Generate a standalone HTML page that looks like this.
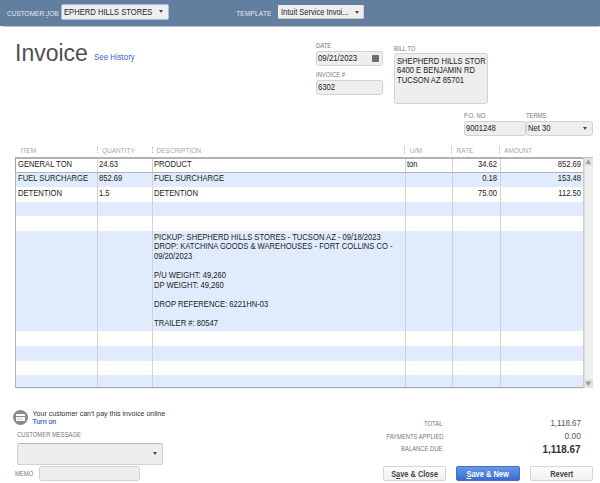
<!DOCTYPE html>
<html><head><meta charset="utf-8">
<style>
*{margin:0;padding:0;box-sizing:border-box}
html,body{width:600px;height:483px;overflow:hidden;background:#fff}
body{position:relative;font-family:"Liberation Sans",sans-serif;color:#333;font-size:7.7px;line-height:1}
.a{position:absolute;white-space:nowrap}
.hdr{left:0;top:0;width:600px;height:26px;background:rgb(98,127,160);box-shadow:0 .6px .8px rgba(60,80,110,.35)}
.hl{color:#e2e8ef;font-size:6.5px}
.lbl{color:#777;font-size:6.5px;transform:scaleX(.9);transform-origin:0 0}
.lbl.r{transform-origin:100% 0}
.inp{background:#eeeeee;border:1px solid #d2d2d2;border-radius:2.5px}
.arr{width:0;height:0;border-left:2.5px solid transparent;border-right:2.5px solid transparent;border-top:3px solid #484848}
.row{position:absolute;left:16px;width:567px;height:15px}
.b{background:#e0ecfd}
.vl{position:absolute;top:157px;height:230px;width:1px;background:#d2d2d2}
.t{position:absolute;font-size:8.4px;color:#222;white-space:nowrap;transform:scaleX(.91);transform-origin:0 0}
.r{text-align:right}
.tr{position:absolute;font-size:8.4px;color:#222;white-space:nowrap;transform:scaleX(.91);transform-origin:100% 0;text-align:right}
.hd{position:absolute;top:148.4px;font-size:6.5px;color:#a8a8a8}
.dot{position:absolute;top:147px;width:1px;height:6px;border-left:1px dotted #b8b8b8}
</style></head><body>
<div class="a hdr"></div>
<div class="a hl" style="left:7px;top:10.5px">CUSTOMER:JOB</div>
<div class="a" style="left:46.6px;top:16.6px;width:1.8px;height:.9px;background:#c8d2de"></div>
<div class="a" style="left:61px;top:4.3px;width:108.3px;height:15.4px;border:1.5px solid #a3bfe6;border-radius:2px;background:#efefef"></div>
<div class="t" style="left:64px;top:8px">EPHERD HILLS STORES</div>
<div class="a arr" style="left:159.3px;top:10.2px"></div>
<div class="a hl" style="left:236.2px;top:10.5px;letter-spacing:.2px">TEMPLATE</div>
<div class="a" style="left:278.2px;top:4.6px;width:86.3px;height:14.6px;background:#eee;border-radius:1px;border-bottom:1px solid #c4c4c4;border-right:1px solid #d0d0d0"></div>
<div class="t" style="left:281px;top:8px;transform:scaleX(.895)">Intuit Service Invoi...</div>
<div class="a arr" style="left:354.5px;top:10.5px"></div>

<div class="a" style="left:15px;top:41.5px;font-size:23px;color:#505050">Invoice</div>
<div class="a" style="left:94.3px;top:53.4px;font-size:8.4px;color:#3a66c8;transform:scaleX(.94);transform-origin:0 0">See History</div>

<div class="a lbl" style="left:316px;top:42.5px">DATE</div>
<div class="a inp" style="left:316px;top:51px;width:67px;height:15px"></div>
<div class="t" style="left:318px;top:54px;transform:scaleX(.935)">09/21/2023</div>
<div class="a" style="left:372px;top:54.8px;width:7px;height:7.1px;background:#6c6c6c;border-radius:.8px"></div>
<div class="a lbl" style="left:316px;top:71.8px">INVOICE #</div>
<div class="a inp" style="left:316px;top:79.5px;width:67px;height:15px"></div>
<div class="t" style="left:318px;top:83px">6302</div>

<div class="a lbl" style="left:394px;top:45.5px">BILL TO</div>
<div class="a inp" style="left:394px;top:53.4px;width:94px;height:50.6px"></div>
<div class="t" style="left:397px;top:57.1px;line-height:9.35px">SHEPHERD HILLS STOR<br>6400 E BENJAMIN RD<br>TUCSON AZ 85701</div>

<div class="a lbl" style="left:464px;top:112.5px">P.O. NO.</div>
<div class="a inp" style="left:463.5px;top:121.4px;width:62px;height:14.5px"></div>
<div class="t" style="left:465.5px;top:124.2px">9001248</div>
<div class="a lbl" style="left:526.3px;top:112.5px">TERMS</div>
<div class="a inp" style="left:526.3px;top:121.4px;width:66.5px;height:14.5px"></div>
<div class="t" style="left:528px;top:124.2px">Net 30</div>
<div class="a arr" style="left:583.3px;top:126.8px;border-left-width:2.5px;border-right-width:2.5px;border-top-width:3px"></div>

<!-- table header -->
<div class="hd" style="left:20.6px">ITEM</div>
<div class="dot" style="left:97px"></div>
<div class="hd" style="left:102px">QUANTITY</div>
<div class="dot" style="left:151.5px"></div>
<div class="hd" style="left:156.6px">DESCRIPTION</div>
<div class="dot" style="left:404px"></div>
<div class="hd" style="left:410px">U/M</div>
<div class="dot" style="left:451px"></div>
<div class="hd" style="left:456.6px">RATE</div>
<div class="dot" style="left:499px"></div>
<div class="hd" style="left:504px">AMOUNT</div>

<!-- rows -->
<div class="row" style="top:157px;height:15px"></div>
<div class="row b" style="top:172px"></div>
<div class="row" style="top:187px"></div>
<div class="row b" style="top:202px;height:14px"></div>
<div class="row" style="top:216px"></div>
<div class="row b" style="top:231px;height:100.2px"></div>
<div class="row" style="top:331.2px;height:14.8px"></div>
<div class="row b" style="top:346px"></div>
<div class="row" style="top:361px;height:14.4px"></div>
<div class="row b" style="top:375.4px;height:11.6px"></div>

<div class="vl" style="left:97px"></div>
<div class="vl" style="left:152px"></div>
<div class="vl" style="left:405px"></div>
<div class="vl" style="left:452px"></div>
<div class="vl" style="left:500px"></div>

<div class="a" style="left:15px;top:157px;width:1px;height:231px;background:#b4b4b4"></div>
<div class="a" style="left:15px;top:157px;width:569px;height:1px;background:#aaa"></div>
<div class="a" style="left:15px;top:387px;width:569px;height:1px;background:#a8a8a8;box-shadow:0 .5px .6px rgba(0,0,0,.12)"></div>
<div class="a" style="left:15.2px;top:156.9px;width:568.6px;height:15.7px;border:1.1px solid #a4a4a4;border-top:2px solid #b2b2b2;border-bottom:1.5px solid #b4b4b4"></div>

<!-- scrollbar -->
<div class="a" style="left:583px;top:157px;width:10.1px;height:231px;background:#f0f0f0;border-left:1px solid #cdcdcd;box-shadow:inset 1px 0 0 #dcdcdc"></div>
<div class="a" style="left:584.5px;top:157.3px;width:8.6px;height:8.5px;background:#e4e4e4"></div>
<svg class="a" style="left:583px;top:157px" width="12" height="12"><polygon points="2.5,7 8,7 5.25,2" fill="#a4a4a4"/></svg>
<div class="a" style="left:583px;top:157px;width:10.1px;height:1.2px;background:#c4c4c4"></div>
<div class="a" style="left:584.5px;top:379px;width:8.5px;height:9px;background:#e2e2e2"></div>
<svg class="a" style="left:583px;top:378px" width="12" height="12"><polygon points="2.2,3.6 8.4,3.6 5.3,8" fill="#9a9a9a"/></svg>

<!-- row text -->
<div class="t" style="left:17.6px;top:160px">GENERAL TON</div>
<div class="t" style="left:99.2px;top:160px">24.63</div>
<div class="t" style="left:154.2px;top:160px">PRODUCT</div>
<div class="t" style="left:407px;top:160px">ton</div>
<div class="tr" style="left:453px;width:44px;top:160px">34.62</div>
<div class="tr" style="left:501px;width:80px;top:160px">852.69</div>

<div class="t" style="left:17.6px;top:174.2px">FUEL SURCHARGE</div>
<div class="t" style="left:99.2px;top:174.2px">852.69</div>
<div class="t" style="left:154.2px;top:174.2px">FUEL SURCHARGE</div>
<div class="tr" style="left:453px;width:44px;top:174.2px">0.18</div>
<div class="tr" style="left:501px;width:80px;top:174.2px">153.48</div>

<div class="t" style="left:17.6px;top:189.2px">DETENTION</div>
<div class="t" style="left:99.2px;top:189.2px">1.5</div>
<div class="t" style="left:154.2px;top:189.2px">DETENTION</div>
<div class="tr" style="left:453px;width:44px;top:189.2px">75.00</div>
<div class="tr" style="left:501px;width:80px;top:189.2px">112.50</div>

<div class="t" style="left:153.8px;top:232.8px;line-height:9.6px">PICKUP: SHEPHERD HILLS STORES - TUCSON AZ - 09/18/2023<br>DROP: KATCHINA GOODS &amp; WAREHOUSES - FORT COLLINS CO -<br>09/20/2023<br><br>P/U WEIGHT: 49,260<br>DP WEIGHT: 49,260<br><br>DROP REFERENCE: 6221HN-03<br><br>TRAILER #: 80547</div>

<!-- bottom -->
<div class="a" style="left:12.8px;top:409.8px;width:15.4px;height:15.4px;border-radius:50%;background:#8a8a8a"></div>
<div class="a" style="left:15.9px;top:414px;width:8.8px;height:6.9px;background:#f8f8f8;border-radius:.5px"></div>
<div class="a" style="left:17.2px;top:418px;width:5.4px;height:1.8px;background:#e4e4e4"></div>
<div class="a" style="left:15.8px;top:416px;width:9.4px;height:1.1px;background:#8c8c8c"></div>
<div class="a" style="left:32.5px;top:409.9px;font-size:7.05px;color:#333">Your customer can't pay this invoice online</div>
<div class="a" style="left:32.4px;top:418.4px;font-size:7px;color:#2f5ccc;-webkit-text-stroke:.15px #2f5ccc">Turn on</div>
<div class="a lbl" style="left:17.4px;top:432.3px">CUSTOMER MESSAGE</div>
<div class="a inp" style="left:17.2px;top:442.8px;width:145.6px;height:21.9px;border-top:1.5px solid #b8b8b8"></div>
<div class="a" style="left:153.3px;top:451.7px;width:0;height:0;border-left:2.7px solid transparent;border-right:2.7px solid transparent;border-top:3.3px solid #444"></div>
<div class="a lbl" style="left:15px;top:470.8px">MEMO</div>
<div class="a inp" style="left:39px;top:466px;width:100.5px;height:15px"></div>

<div class="a lbl r" style="left:380px;width:62.4px;top:421.1px">TOTAL</div>
<div class="a lbl r" style="left:380px;width:61.8px;top:433.6px">PAYMENTS APPLIED</div>
<div class="a lbl r" style="left:380px;width:62.4px;top:446.1px">BALANCE DUE</div>
<div class="a r" style="left:500px;width:81px;top:418.2px;font-size:9.6px;color:#555;transform:scaleX(.835);transform-origin:100% 0">1,118.67</div>
<div class="a r" style="left:500px;width:81px;top:431.3px;font-size:9.4px;color:#555;transform:scaleX(.9);transform-origin:100% 0">0.00</div>
<div class="a r" style="left:500px;width:80.5px;top:443.8px;font-size:10.5px;font-weight:bold;color:#333;transform:scaleX(.94);transform-origin:100% 0">1,118.67</div>

<div class="a" style="left:383.3px;top:466.2px;width:63.2px;height:15.3px;border:1px solid #d6d6d6;border-radius:2px;background:linear-gradient(#fdfdfd,#f0f0f0)"></div>
<div class="a" style="left:383.3px;top:469.6px;width:63.2px;text-align:center;font-size:8.5px;font-weight:bold;color:#444;transform:scaleX(.87)">S<span style="text-decoration:underline;text-decoration-thickness:.5px;text-underline-offset:1px">a</span>ve &amp; Close</div>
<div class="a" style="left:456.25px;top:466.2px;width:63.25px;height:15.3px;border-radius:2px;background:linear-gradient(#6598e6,#3a6bca);border:1px solid #4070cc"></div>
<div class="a" style="left:456.25px;top:469.6px;width:63.25px;text-align:center;font-size:8.5px;font-weight:bold;color:#fff;transform:scaleX(.88)"><span style="text-decoration:underline;text-decoration-thickness:.5px;text-underline-offset:1px">S</span>ave &amp; New</div>
<div class="a" style="left:529.5px;top:466.2px;width:63.5px;height:15.3px;border:1px solid #d6d6d6;border-radius:2px;background:linear-gradient(#fdfdfd,#f0f0f0)"></div>
<div class="a" style="left:529.5px;top:469.6px;width:63.5px;text-align:center;font-size:8.5px;font-weight:bold;color:#444;transform:scaleX(.87)">Revert</div>
</body></html>
